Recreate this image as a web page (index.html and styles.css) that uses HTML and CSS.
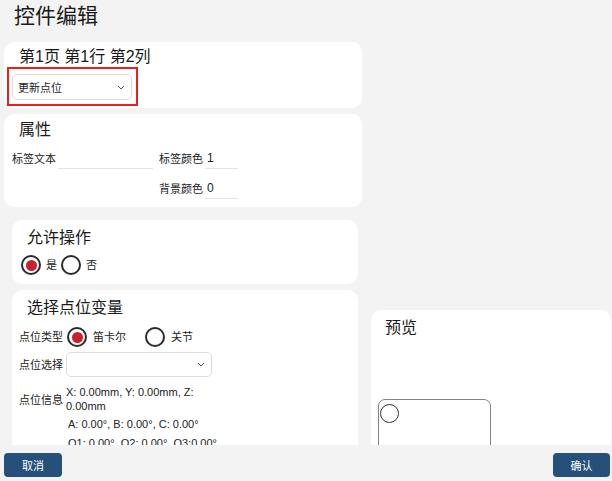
FILE: index.html
```html
<!DOCTYPE html>
<html lang="zh-CN">
<head>
<meta charset="utf-8">
<title>控件编辑</title>
<link rel="stylesheet" href="styles.css">
</head>
<body>
<div class="app">
  <header class="hdr"><h1 class="page-title">控件编辑</h1></header>
  <main class="main">
    <div class="left">
      <section class="card card-pos">
        <h2 class="card-title">第1页 第1行 第2列</h2>
        <div class="highlight">
          <div class="select select-action"><span>更新点位</span><svg class="chev" width="8" height="5" viewBox="0 0 8 5"><path d="M1 1l3 3 3-3" fill="none" stroke="#555" stroke-width="1"/></svg></div>
        </div>
      </section>
      <section class="card card-attr">
        <h2 class="card-title">属性</h2>
        <div class="attr-grid">
          <div class="field"><span class="lbl">标签文本</span><span class="line-input wide"></span></div>
          <div class="attr-col">
            <div class="field"><span class="lbl">标签颜色</span><span class="line-input narrow">1</span></div>
            <div class="field"><span class="lbl">背景颜色</span><span class="line-input narrow">0</span></div>
          </div>
        </div>
      </section>
      <section class="card card-allow">
        <h2 class="card-title">允许操作</h2>
        <div class="radio-row">
          <label class="opt"><span class="radio on"></span><span>是</span></label>
          <label class="opt"><span class="radio"></span><span>否</span></label>
        </div>
      </section>
      <section class="card card-var">
        <h2 class="card-title">选择点位变量</h2>
        <div class="row row-type">
          <span class="lbl2">点位类型</span>
          <label class="opt opt-wide"><span class="radio on"></span><span>笛卡尔</span></label>
          <label class="opt opt-wide"><span class="radio"></span><span>关节</span></label>
        </div>
        <div class="row row-select">
          <span class="lbl2">点位选择</span>
          <div class="select select-point"><span></span><svg class="chev" width="8" height="5" viewBox="0 0 8 5"><path d="M1 1l3 3 3-3" fill="none" stroke="#555" stroke-width="1"/></svg></div>
        </div>
        <div class="row row-info">
          <span class="lbl2">点位信息</span>
          <div class="info-val">X: 0.00mm, Y: 0.00mm, Z: 0.00mm</div>
        </div>
        <div class="info-extra">A: 0.00°, B: 0.00°, C: 0.00°</div>
        <div class="info-extra">Q1: 0.00°, Q2: 0.00°, Q3:0.00°</div>
      </section>
    </div>
    <div class="right">
      <section class="card card-preview">
        <h2 class="card-title">预览</h2>
        <div class="preview-box"><span class="preview-dot"></span></div>
      </section>
    </div>
  </main>
  <footer class="footer">
    <button class="btn btn-cancel">取消</button>
    <button class="btn btn-ok">确认</button>
  </footer>
</div>
</body>
</html>
```

FILE: styles.css
```css
html, body {
  margin: 0;
  padding: 0;
  background: #f3f3f3;
  font-family: "Liberation Sans", "Noto Sans CJK SC", sans-serif;
  color: #1e1e1e;
}
body {
  width: 612px;
  height: 481px;
  overflow: hidden;
}
.app {
  display: flex;
  flex-direction: column;
  height: 481px;
}
.hdr {
  flex: none;
  height: 42px;
  box-sizing: border-box;
  padding: 2px 0 0 14px;
}
.page-title {
  margin: 0;
  font-size: 21px;
  font-weight: 400;
  line-height: 28px;
  color: #1a1a1a;
}
.main {
  flex: none;
  display: flex;
  height: 403px;
  overflow: hidden;
}
.left {
  flex: none;
  width: 358px;
  margin-left: 4px;
  display: flex;
  flex-direction: column;
}
.right {
  flex: none;
  width: 240px;
  margin-left: 9px;
  padding-top: 268px;
}
.card {
  background: #fff;
  border-radius: 10px;
  box-sizing: border-box;
  flex: none;
}
.card-title {
  margin: 0;
  font-size: 16px;
  font-weight: 400;
  line-height: 20px;
  color: #1a1a1a;
  white-space: nowrap;
}

/* card 1 */
.card-pos {
  padding: 5px 0 2px 0;
}
.card-pos .card-title {
  margin-left: 15px;
}
.highlight {
  margin-left: 3px;
  width: fit-content;
  border: 2px solid #e5221d;
  padding: 5px 4px 4px 3px;
}
.select {
  display: flex;
  align-items: center;
  justify-content: space-between;
  box-sizing: border-box;
  border: 1px solid #dcdcdc;
  border-radius: 5px;
  background: #fff;
  font-size: 11px;
  padding: 0 6px 0 5px;
}
.select-action {
  width: 120px;
  height: 26px;
}
.chev {
  display: block;
  flex: none;
}

/* card 2 */
.card-attr {
  margin-top: 6px;
  padding: 6px 0 8px 8px;
}
.card-attr .card-title {
  margin: 0 0 8px 7px;
}
.attr-grid {
  display: flex;
  align-items: flex-start;
  gap: 6px;
}
.attr-col {
  display: flex;
  flex-direction: column;
  gap: 9px;
}
.field {
  display: flex;
  align-items: center;
  height: 21px;
}
.lbl {
  width: 44px;
  margin-right: 2px;
  font-size: 11px;
  line-height: 14px;
  white-space: nowrap;
  color: #222;
}
.line-input {
  box-sizing: border-box;
  height: 21px;
  border-bottom: 1px solid #e4e4e4;
  font-size: 12px;
  line-height: 20px;
  padding-left: 2px;
  color: #222;
}
.wide { width: 95px; }
.narrow { width: 33px; }

/* card 3 */
.card-allow {
  margin: 13px 4px 0 8px;
  padding: 8px 8px 9px 9px;
}
.card-allow .card-title {
  margin: 0 0 7px 6px;
}
.radio-row {
  display: flex;
  align-items: center;
  height: 20px;
}
.opt {
  display: flex;
  align-items: center;
  gap: 5px;
  margin-right: 4px;
  font-size: 11px;
  line-height: 14px;
  color: #222;
}
.radio {
  flex: none;
  width: 20px;
  height: 20px;
  box-sizing: border-box;
  border: 2px solid #2a2a2a;
  border-radius: 50%;
  display: flex;
  align-items: center;
  justify-content: center;
}
.radio.on::after {
  content: "";
  width: 11px;
  height: 11px;
  border-radius: 50%;
  background: #c8202d;
}

/* card 4 */
.card-var {
  margin: 6px 4px 0 8px;
  padding: 8px 8px 20px 7px;
}
.card-var .card-title {
  margin: 0 0 9px 8px;
}
.row {
  display: flex;
  align-items: center;
}
.lbl2 {
  flex: none;
  width: 47px;
  font-size: 11px;
  line-height: 14px;
  white-space: nowrap;
  color: #222;
}
.row-type {
  height: 20px;
}
.row-type .opt-wide {
  gap: 6px;
  margin-right: 19px;
}
.row-type .opt-wide:first-of-type .radio {
  margin-left: 1px;
}
.row-select {
  margin-top: 5px;
}
.select-point {
  width: 146px;
  height: 25px;
}
.row-info {
  margin-top: 9px;
}
.info-val {
  width: 146px;
  font-size: 11px;
  line-height: 13.5px;
  color: #222;
}
.info-extra {
  margin-top: 5px;
  padding-left: 49px;
  font-size: 11px;
  line-height: 13.5px;
  color: #222;
  white-space: nowrap;
}

/* preview */
.card-preview {
  height: 200px;
  padding: 8px 0 0 14px;
}
.preview-box {
  margin: 61px 0 0 -7px;
  width: 113px;
  height: 80px;
  box-sizing: border-box;
  border: 1px solid #858585;
  border-radius: 7px;
  padding: 4px 0 0 1px;
}
.preview-dot {
  display: block;
  width: 19px;
  height: 19px;
  box-sizing: border-box;
  border: 1.5px solid #333;
  border-radius: 50%;
}

/* footer */
.footer {
  flex: none;
  height: 36px;
  box-sizing: border-box;
  padding: 8px 2px 0 4px;
  display: flex;
  justify-content: space-between;
  align-items: flex-start;
}
.btn {
  height: 24px;
  border: none;
  border-radius: 4px;
  background: #24507a;
  color: #fff;
  font-family: "Liberation Sans", "Noto Sans CJK SC", sans-serif;
  font-size: 11px;
  padding: 0;
}
.btn-cancel { width: 58px; }
.btn-ok { width: 57px; }
```
